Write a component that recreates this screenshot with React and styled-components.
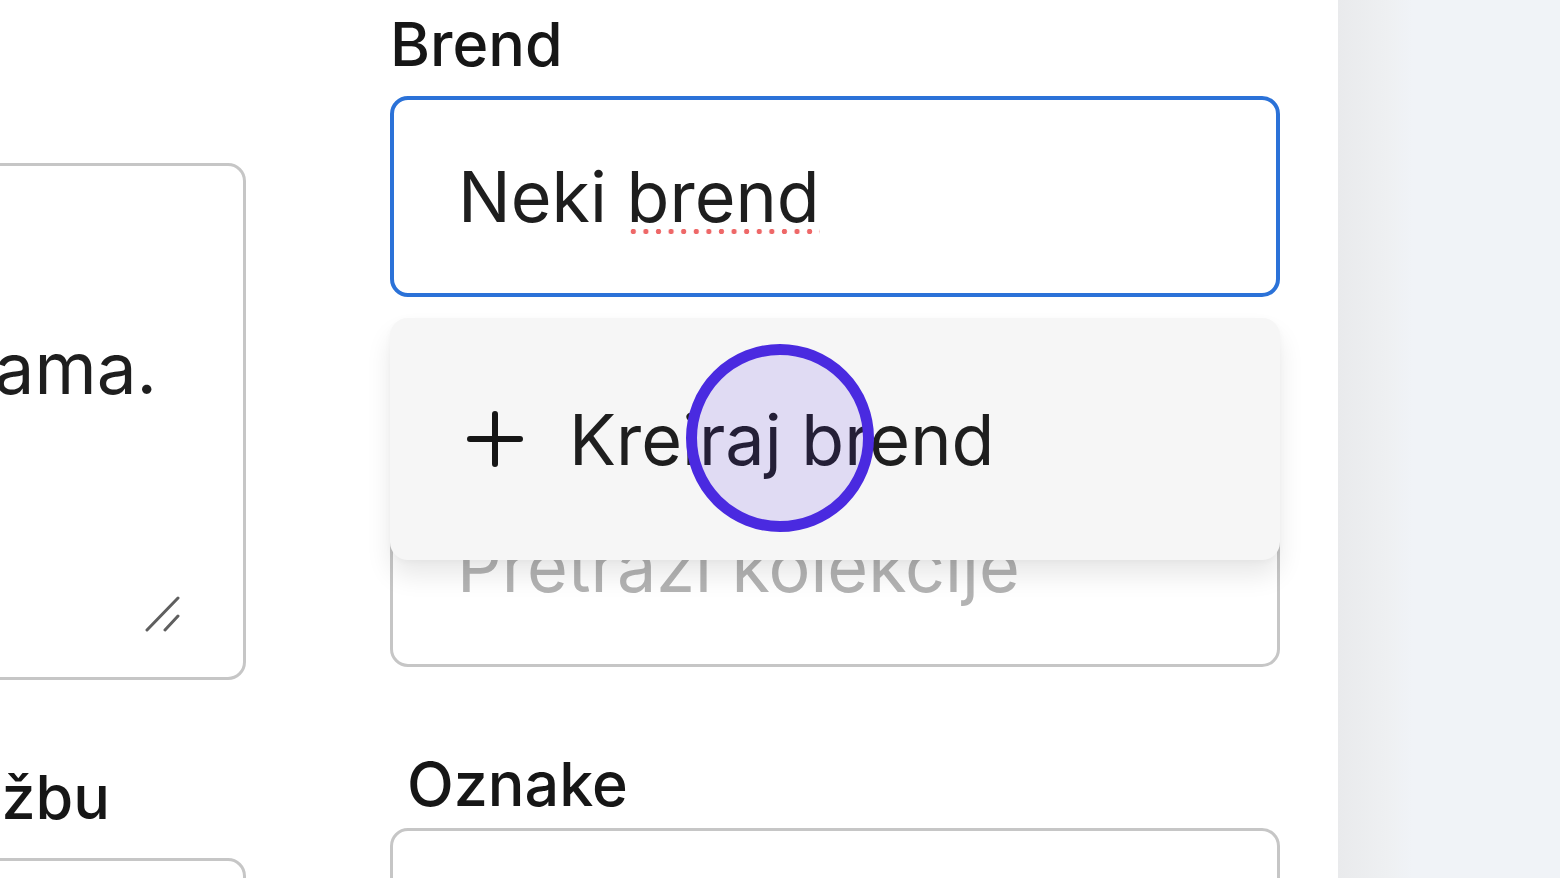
import React from 'react';
import styled, { createGlobalStyle } from 'styled-components';

const GlobalStyle = createGlobalStyle`
  html, body {
    margin: 0;
    padding: 0;
    height: 100%;
    overflow: hidden;
    font-family: Inter, "Noto Sans", "Liberation Sans", sans-serif;
    color: #1e1e1e;
    background: #ffffff;
  }
  * {
    box-sizing: border-box;
  }
`;

const Page = styled.div`
  display: flex;
  height: 100vh;
  overflow: hidden;
`;

const Main = styled.div`
  flex: 1;
  background: #ffffff;
  overflow: hidden;
`;

const SidePanel = styled.aside`
  width: 222px;
  flex-shrink: 0;
  background: linear-gradient(90deg, #e9eaec 0px, #eef0f2 50px, #f0f3f7 75px);
`;

const Columns = styled.div`
  display: flex;
  gap: 144px;
  margin-left: -644px;
`;

const Column = styled.div`
  width: 890px;
  flex-shrink: 0;
  display: flex;
  flex-direction: column;
  padding-top: ${({ $top }) => $top}px;
`;

const Field = styled.div`
  display: flex;
  flex-direction: column;
  gap: ${({ $gap }) => $gap}px;
  margin-top: ${({ $space }) => $space || 0}px;
`;

const Label = styled.div`
  display: flex;
  justify-content: ${({ $end }) => ($end ? 'flex-end' : 'flex-start')};
  white-space: nowrap;
  font-size: 61px;
  line-height: 70px;
  font-weight: 500;
  color: #161616;
  padding-left: ${({ $indent }) => $indent || 0}px;
  padding-right: ${({ $endPad }) => $endPad || 0}px;
`;

const InputWrap = styled.div`
  position: relative;
`;

const InputBox = styled.div`
  height: 201px;
  display: flex;
  align-items: center;
  padding: 0 64px;
  border: ${({ $focused }) => ($focused ? '4px solid #2b72d8' : '3px solid #c6c6c6')};
  border-radius: 18px;
  background: #ffffff;
  font-size: 70px;
  color: ${({ $placeholder }) => ($placeholder ? '#b3b3b3' : '#1e1e1e')};
  white-space: nowrap;
`;

const Misspelled = styled.span`
  background-image: radial-gradient(circle, #ee6868 2.4px, transparent 3px);
  background-size: 12.6px 7px;
  background-repeat: repeat-x;
  background-position: 0 calc(100% - 4px);
`;

const Dropdown = styled.div`
  position: absolute;
  top: calc(100% + 21px);
  left: 0;
  right: 0;
  height: 242px;
  z-index: 5;
  display: flex;
  align-items: center;
  padding-left: 77px;
  gap: 46px;
  background: #f6f6f6;
  border-radius: 18px;
  box-shadow: 0 16px 26px rgba(0, 0, 0, 0.09), 0 2px 6px rgba(0, 0, 0, 0.03);
  font-size: 70px;
  color: #1e1e1e;
`;

const ClickMark = styled.div`
  position: absolute;
  left: 296px;
  top: 26px;
  width: 188px;
  height: 188px;
  border-radius: 50%;
  border: 11px solid #4a2ae0;
  background: rgba(74, 42, 224, 0.13);
`;

const TextareaBox = styled.div`
  position: relative;
  height: 517px;
  border: 3px solid #c6c6c6;
  border-radius: 18px;
  padding: 76px 86px 0 65px;
  font-size: 71px;
  line-height: 84px;
  color: #1e1e1e;
  overflow: hidden;
`;

const TextLine = styled.div`
  display: flex;
  justify-content: ${({ $end }) => ($end ? 'flex-end' : 'flex-start')};
  white-space: nowrap;
`;

const Grip = styled.svg`
  position: absolute;
  right: 63px;
  bottom: 45px;
`;

const PlusIcon = () => (
  <svg width="56" height="56" viewBox="0 0 56 56">
    <path d="M28 3v50M3 28h50" stroke="#161616" strokeWidth="6" strokeLinecap="round" fill="none" />
  </svg>
);

export default function App() {
  return (
    <Page>
      <GlobalStyle />
      <Main>
        <Columns>
          <Column $top={76}>
            <Field $gap={17}>
              <Label>Opis proizvoda</Label>
              <TextareaBox>
                <TextLine>Udoban model.</TextLine>
                <TextLine $end>Pogodan za svakodnevno nošenje u svim prilikama.</TextLine>
                <Grip width="36" height="36" viewBox="0 0 36 36">
                  <path d="M3 34L34 2M21 34L34 20" stroke="#5f5f5f" strokeWidth="3" strokeLinecap="round" fill="none" />
                </Grip>
              </TextareaBox>
            </Field>
            <Field $gap={26} $space={82}>
              <Label $end $endPad={136}>Napomena za narudžbu</Label>
              <InputBox />
            </Field>
          </Column>

          <Column $top={9}>
            <Field $gap={17}>
              <Label>Brend</Label>
              <InputWrap>
                <InputBox $focused>
                  Neki&nbsp;<Misspelled>brend</Misspelled>
                </InputBox>
                <Dropdown>
                  <PlusIcon />
                  <span>Kreiraj brend</span>
                  <ClickMark />
                </Dropdown>
              </InputWrap>
            </Field>
            <Field $gap={16} $space={83}>
              <Label>Kolekcije</Label>
              <InputBox $placeholder>Pretraži kolekcije</InputBox>
            </Field>
            <Field $gap={9} $space={82}>
              <Label $indent={17}>Oznake</Label>
              <InputBox />
            </Field>
          </Column>
        </Columns>
      </Main>
      <SidePanel />
    </Page>
  );
}
